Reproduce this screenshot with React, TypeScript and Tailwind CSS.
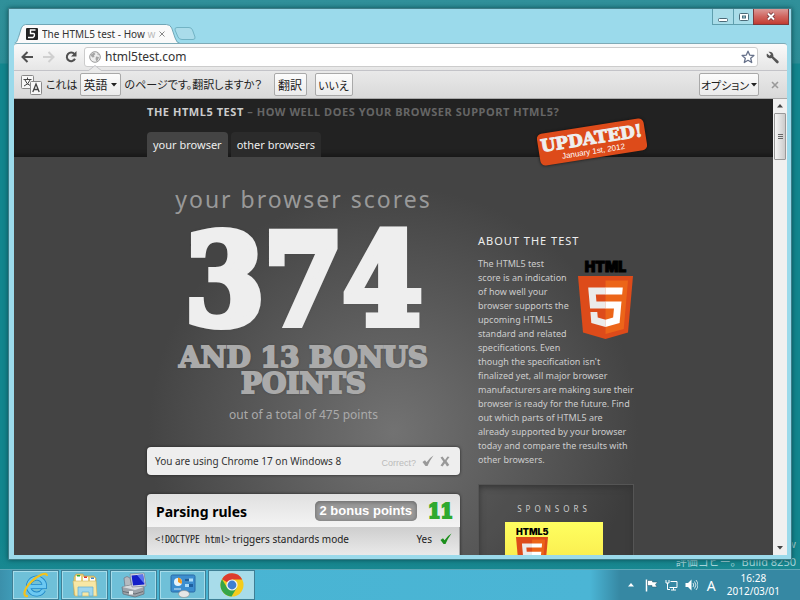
import React from "react";

const SANS = "font-['Noto_Sans','Noto_Sans_CJK_JP',sans-serif]";
const JP = "font-['Noto_Sans_CJK_JP',sans-serif] [font-feature-settings:'palt']";
const SLAB = "font-['DejaVu_Serif_Condensed','DejaVu_Serif',serif] font-bold";
const SLAB_WIDE = "font-['DejaVu_Serif',serif] font-bold";

function Html5Shield({ className }: { className: string }) {
  return (
    <svg viewBox="30 0 451 512" preserveAspectRatio="none" className={className} aria-hidden="true">
      <path fill="#dd4b1a" d="M71 460 30 0h451l-41 460-185 52z" />
      <path fill="#ec6519" d="m256 472 149-41 35-394H256z" />
      <path fill="#ebebeb" d="M256 208h-75l-5-58h80V94H114l1 15 14 156h127zM256 355l-64-17-4-45h-56l7 89 117 32z" />
      <path fill="#fff" d="M255 208v57h70l-7 73-63 17v59l116-32 1-10 13-149 2-15zM255 94v56h137l1-12 3-29 1-15z" />
    </svg>
  );
}

function WindowControls() {
  const base = "flex h-4 items-center justify-center border border-t-0 border-[#5f9fae]";
  return (
    <div className="-mr-0.5 flex self-start">
      <button aria-label="最小化" className={`${base} w-[22px] bg-[#a9dde9]`}>
        <svg width="10" height="12" viewBox="0 0 10 12">
          <rect x=".5" y="7.5" width="9" height="3" rx="1" fill="#fff" stroke="#4b6a78" />
        </svg>
      </button>
      <button aria-label="最大化" className={`${base} -ml-px w-[21px] bg-[#a9dde9]`}>
        <svg width="10" height="8" viewBox="0 0 10 8">
          <rect x=".5" y=".5" width="9" height="7" rx="1" fill="#fff" stroke="#4b6a78" />
          <rect x="3.5" y="3" width="3" height="2" fill="#a9dde9" stroke="#4b6a78" />
        </svg>
      </button>
      <button
        aria-label="閉じる"
        className="-ml-px flex h-4 w-9 items-center justify-center border border-t-0 border-[#7c3a3c] bg-gradient-to-b from-[#d99a98] via-[#d0655f] to-[#c23a30]"
      >
        <svg width="10" height="9" viewBox="0 0 10 9">
          <path d="M2 1.5 8 7.5M8 1.5 2 7.5" stroke="#6d3337" strokeWidth="3.6" />
          <path d="M2 1.5 8 7.5M8 1.5 2 7.5" stroke="#fff" strokeWidth="2" />
        </svg>
      </button>
    </div>
  );
}

function TitleBar() {
  return (
    <div className="flex h-[34px] shrink-0 items-end justify-between">
      <div className="flex items-end">
        <div className="relative flex h-[19px] w-[166px] items-center pl-3">
          <svg viewBox="0 0 170 19" className="absolute inset-0 h-full w-full" preserveAspectRatio="none" aria-hidden="true">
            <path
              d="M0 19.500C3 19 3.500 16 5 12L7.500 4Q9 .5 12 .5H156Q160 .5 161.500 4L165 14Q166.500 19 170 19.500Z"
              fill="#fafafa"
              stroke="#6fa5b5"
            />
          </svg>
          <svg width="12" height="12" viewBox="0 0 12 12" className="relative shrink-0" aria-hidden="true">
            <rect width="12" height="12" rx="1" fill="#222" />
            <path d="M9.500 2H4.500V5.500H7.500Q8.500 5.500 8.500 7T7 9.500H2" fill="none" stroke="#fff" strokeWidth="1.400" />
          </svg>
          <span className={`relative ml-1 w-[115px] shrink-0 overflow-hidden whitespace-nowrap text-[10px] leading-4 text-[#333] ${SANS}`}>
            The HTML5 test - How <span className="text-[#bbb]">w</span>
          </span>
          <button aria-label="タブを閉じる" className="relative ml-0.5">
            <svg width="6" height="6" viewBox="0 0 6 6">
              <path d="m.5.5 5 5m0-5-5 5" stroke="#888" />
            </svg>
          </button>
        </div>
        <button aria-label="新しいタブ" className="mb-[3px] -ml-1.5">
          <svg width="22" height="13" viewBox="0 0 22 13">
            <path d="M3 .5H15Q17.500.5 18.500 3L21 10Q21.500 12.500 19 12.500H8Q5 12.500 4 10L1 3Q.5.5 3 .5Z" fill="#aadcea" stroke="#72b3c4" />
          </svg>
        </button>
      </div>
      <WindowControls />
    </div>
  );
}

function Toolbar() {
  return (
    <div className="flex h-[27px] shrink-0 items-center rounded-t-[3px] border-t border-[#7faab6] bg-gradient-to-b from-[#fafafa] to-[#e6e6e6] pr-2 pl-[7px]">
      <button aria-label="戻る">
        <svg width="12" height="12" viewBox="0 0 12 12" fill="none" stroke="#505050" strokeWidth="2">
          <path d="M12 6H2M6.500 1 1.500 6l5 5" />
        </svg>
      </button>
      <button aria-label="進む" className="ml-2.5">
        <svg width="12" height="12" viewBox="0 0 12 12" fill="none" stroke="#d0d0d0" strokeWidth="2">
          <path d="M0 6h10M5.500 1l5 5-5 5" />
        </svg>
      </button>
      <button aria-label="再読み込み" className="ml-2.5">
        <svg width="12" height="12" viewBox="0 0 12 12">
          <path d="M9.500 3.200A4.300 4.300 0 1 0 10 7.800" fill="none" stroke="#505050" strokeWidth="2" />
          <path d="M11.500 0v5.500H6z" fill="#505050" />
        </svg>
      </button>
      <div className="ml-[7px] flex h-5 grow items-center rounded-[3px] border border-[#ccc] bg-white pr-0.5 pl-1">
        <svg width="12" height="12" viewBox="0 0 12 12" aria-hidden="true">
          <circle cx="6" cy="6" r="5.300" fill="#eee" stroke="#999" />
          <path d="M2 3.500 5 1.500 6.500 3 5 4.500 5.500 6 3.500 6.500 2 5zM7 5.500l3 .5-1 3-1.500 1.500L6.500 8zM8 2l2 1.500-1 1z" fill="#a5a5a5" />
        </svg>
        <input
          aria-label="アドレス"
          defaultValue="html5test.com"
          className={`ml-1 min-w-0 grow bg-transparent text-[12px] leading-4 text-[#333] outline-none ${SANS}`}
        />
        <button aria-label="ブックマーク">
          <svg width="14" height="14" viewBox="0 0 14 14">
            <path d="m7 1.200 1.700 3.900 4.200.4-3.200 2.800 1 4.200L7 10.300l-3.700 2.200 1-4.200L1.100 5.500l4.200-.4z" fill="#fff" stroke="#66718a" strokeWidth="1.300" strokeLinejoin="round" />
          </svg>
        </button>
      </div>
      <button aria-label="設定" className="ml-2">
        <svg width="13" height="13" viewBox="0 0 13 13">
          <path d="M2.500.8 5 3.200 3.600 4.800 1 2.400C0 4.500 1 7 3.500 7.300c.8.1 1.500 0 2.100-.2l4.800 5c1.400 1 2.900-.6 2-2L7.300 5.500C7.900 2.500 5.500.1 2.500.8Z" fill="#555" />
        </svg>
      </button>
    </div>
  );
}

function TranslateBar() {
  const box =
    "h-[23px] shrink-0 whitespace-nowrap rounded-[2px] border border-[#a9a9a9] bg-gradient-to-b from-[#fcfcfc] to-[#ebebeb] leading-5 text-[#222]";
  return (
    <div className={`relative flex h-[29px] shrink-0 items-center border-t border-b border-t-[#c3c3c8] border-b-[#aaa] bg-gradient-to-b from-[#e9e9e9] to-[#d9d9d9] pr-2 pl-[7px] text-[11px] text-[#222] ${JP}`}>
      <svg width="14" height="6" viewBox="0 0 14 6" className="absolute -top-[6px] left-[74px]" aria-hidden="true">
        <path d="M0 6 7 .5 14 6" fill="#e9e9e9" stroke="#c3c3c8" />
      </svg>
      <svg width="21" height="20" viewBox="0 0 21 20" aria-hidden="true">
        <rect x=".5" y=".5" width="12" height="13" rx="1" fill="#f8f8f8" stroke="#888" />
        <path d="M2.500 4.500h8M6.500 2.500v2M4 5q1.500 4.500 6 6M9 5Q7.500 9.500 3 11" fill="none" stroke="#444" />
        <rect x="9.500" y="6.500" width="11" height="13" rx="1" fill="#f8f8f8" stroke="#888" />
        <path d="m11.800 17 3.200-8 3.200 8M13 14.500h4" fill="none" stroke="#444" strokeWidth="1.300" />
      </svg>
      <span className="ml-1 whitespace-nowrap">これは</span>
      <div className="relative ml-0.5">
        <select aria-label="言語" className={`w-[41px] appearance-none pl-[3px] text-[12px] ${box}`}>
          <option>英語</option>
        </select>
        <svg width="6" height="4" viewBox="0 0 6 4" className="pointer-events-none absolute top-2.5 right-1">
          <path d="M0 0h6L3 3.500z" fill="#222" />
        </svg>
      </div>
      <span className="ml-1 w-[149px] shrink-0 whitespace-nowrap">のページです。翻訳しますか？</span>
      <button className={`w-[33px] text-[12px] ${box}`}>翻訳</button>
      <button className={`ml-2 w-[38px] text-[11px] ${box}`}>いいえ</button>
      <div className="grow" />
      <button className={`flex w-[60px] items-center justify-center gap-0.5 text-[11px] ${box}`}>
        オプション
        <svg width="6" height="4" viewBox="0 0 6 4" className="shrink-0">
          <path d="M0 0h6L3 3.500z" fill="#222" />
        </svg>
      </button>
      <button aria-label="閉じる" className="ml-3">
        <svg width="8" height="8" viewBox="0 0 8 8">
          <path d="m1 1 6 6m0-6L1 7" stroke="#999" strokeWidth="1.600" />
        </svg>
      </button>
    </div>
  );
}

function SiteHeader() {
  return (
    <header className="bg-[#222] shadow-[inset_0_-5px_5px_-3px_#151515]">
      <div className="relative mx-auto flex h-[58px] w-[493px] flex-col justify-between">
        <h1 className="pt-[5px] text-[11px] leading-4 font-bold tracking-wider whitespace-nowrap text-[#666]">
          <span className="text-[#ccc]">THE HTML5 TEST</span> – HOW WELL DOES YOUR BROWSER SUPPORT HTML5?
        </h1>
        <nav className="flex gap-[3px] text-[11px] leading-[25px] text-[#eee]">
          <a href="#your" className="rounded-t-[4px] bg-[#444] px-1.5">your browser</a>
          <a href="#other" className="rounded-t-[4px] bg-[#2b2b2b] px-1.5">other browsers</a>
        </nav>
        <div className="absolute top-[27px] -right-[6px] z-10 flex h-[32px] w-[108px] -rotate-[9deg] flex-col items-center justify-center rounded-[5px] bg-[#dd4b1a] text-white shadow-[0_0_3px_#111]">
          <span className={`text-[17px] leading-[19px] text-[#eee] [-webkit-text-stroke:1px_#eee] ${SLAB_WIDE}`}>UPDATED!</span>
          <span className="font-['Liberation_Sans',Arial,sans-serif] text-[8px] leading-[8px]">January 1st, 2012</span>
        </div>
      </div>
    </header>
  );
}

function Score() {
  return (
    <section className="flex flex-col items-center text-center">
      <h2 className="text-[23px] leading-8 tracking-[2px] whitespace-nowrap text-[#999]">your browser scores</h2>
      <strong className={`mt-3 text-[126px] leading-[106px] text-[#eee] [-webkit-text-stroke:8px_#eee] [text-shadow:0_0_5px_#333] ${SLAB}`}>374</strong>
      <p className={`mt-3 w-[270px] text-[28px] leading-[26px] text-[#aaa] [-webkit-text-stroke:2px_#aaa] [text-shadow:0_0_3px_#333] ${SLAB_WIDE}`}>
        AND 13 BONUS POINTS
      </p>
      <p className="mt-1.5 text-[12px] leading-6 text-[#aaa]">out of a total of 475 points</p>
    </section>
  );
}

function Check({ color }: { color: string }) {
  return (
    <svg width="12" height="12" viewBox="0 0 12 12" aria-hidden="true">
      <path d="M.5 7 3 5.200 4.600 7.200Q7 3 11.500.5 7.800 5.500 5.500 11H3.500Z" fill={color} />
    </svg>
  );
}

function Results() {
  return (
    <>
      <div className="mt-5 flex h-7 items-center rounded-[4px] bg-[#eee] px-2 text-[10px] text-[#333] shadow-[0_0_3px_#222]">
        <span className="grow whitespace-nowrap">You are using Chrome 17 on Windows 8</span>
        <span className="pt-1 font-['Liberation_Sans',Arial,sans-serif] text-[9px] leading-3 text-[#bbb]">Correct?</span>
        <button aria-label="正しい" className="ml-1.5"><Check color="#999" /></button>
        <button aria-label="間違い" className="mr-0.5 ml-1.5">
          <svg width="10" height="11" viewBox="0 0 10 11">
            <path d="m.5 1.500 2-1L5 4 7.500.5l2 .5L6.500 5l2.800 4-2.300 1.500L5 7.300l-2.500 3.200-2-1L3.300 5.500z" fill="#999" />
          </svg>
        </button>
      </div>
      <table className="mt-[19px] w-full border-separate border-spacing-0 overflow-hidden rounded-t-[4px] shadow-[0_0_3px_#222]">
        <thead>
          <tr className="h-[33px] bg-gradient-to-b from-[#e0e0e0] to-[#f4f4f4]">
            <th colSpan={2} className="pr-[7px] pl-[9px]">
              <div className="flex items-center gap-[11px]">
                <span className="grow pt-0.5 text-left text-[14px] leading-5 font-bold text-black">Parsing rules</span>
                <span className="rounded-[5px] bg-[#999] px-[5px] font-['Liberation_Sans',Arial,sans-serif] text-[13px] leading-5 whitespace-nowrap text-white shadow-[inset_0_1px_4px_#666]">
                  2 bonus points
                </span>
                <span className={`text-[20px] leading-5 text-[#2fa92f] [-webkit-text-stroke:2px_#2fa92f] ${SLAB}`}>11</span>
              </div>
            </th>
          </tr>
        </thead>
        <tbody>
          <tr className="h-[34px] bg-gradient-to-b from-[#cecece] to-[#f0f0f0] align-top text-[10px] leading-6 text-[#222]">
            <td className="pl-2 whitespace-nowrap">
              <code className="font-['Noto_Sans_Mono_CJK_JP','Noto_Sans_CJK_JP',monospace] text-[10px]">&lt;!DOCTYPE html&gt;</code> triggers standards mode
            </td>
            <td className="pr-2">
              <div className="flex items-center justify-end gap-2">Yes <Check color="#1c8f1c" /></div>
            </td>
          </tr>
        </tbody>
      </table>
    </>
  );
}

function About() {
  return (
    <aside className="w-[156px] pt-[50px] text-[#ccc]">
      <h3 className="text-[11px] leading-4 tracking-[1px] whitespace-nowrap text-[#eee]">ABOUT THE TEST</h3>
      <div className="mt-2 text-[9px] leading-[14px]">
        <div className="float-right ml-1.5 flex h-[88px] w-[57px] flex-col items-center pt-px">
          <span className="font-['Inter',sans-serif] text-[14px] leading-[18px] font-black text-black [-webkit-text-stroke:1px_#000]">HTML</span>
          <Html5Shield className="h-[63px] w-[55px]" />
        </div>
        The HTML5 test
        <br />
        score is an indication
        <br />
        of how well your browser supports the upcoming HTML5 standard and related
        specifications. Even though the specification isn't finalized yet, all major browser manufacturers are making
        sure their browser is ready for the future. Find out which parts of HTML5 are already supported by your browser
        today and compare the results with other browsers.
      </div>
      <div className="mt-[17px] flex h-40 flex-col items-center border border-[#555] bg-black/10 pt-4 pr-1 shadow-[inset_0_2px_6px_#333]">
        <h4 className="text-[8px] leading-4 tracking-[4px] text-[#ccc]">SPONSORS</h4>
        <a href="#sponsor" className="mt-[5px] flex h-[100px] w-[98px] flex-col items-start bg-gradient-to-b from-[#ffff60] to-[#f0d030] px-[11px] pt-1">
          <span className="font-['Inter',sans-serif] text-[9px] leading-[11px] font-black text-black">HTML5</span>
          <Html5Shield className="h-9 w-8" />
        </a>
      </div>
    </aside>
  );
}

function Scrollbar() {
  return (
    <div className="flex w-3.5 shrink-0 flex-col items-center bg-[#f0f0f0]">
      <button aria-label="上へ" className="flex h-3.5 w-full items-center justify-center">
        <svg width="6" height="4" viewBox="0 0 6 4"><path d="M0 3.500h6L3 0z" fill="#444" /></svg>
      </button>
      <div className="flex h-[47px] w-3 flex-col items-center justify-center gap-px rounded-[1px] border border-[#999] bg-gradient-to-r from-[#f5f5f5] to-[#ccc]">
        <i className="h-px w-[5px] bg-[#666]" />
        <i className="h-px w-[5px] bg-[#666]" />
        <i className="h-px w-[5px] bg-[#666]" />
      </div>
      <div className="grow" />
      <button aria-label="下へ" className="flex h-3.5 w-full items-center justify-center">
        <svg width="6" height="4" viewBox="0 0 6 4"><path d="M0 0h6L3 3.500z" fill="#444" /></svg>
      </button>
    </div>
  );
}

function ExplorerIcon() {
  return (
    <svg width="28" height="26" viewBox="0 0 28 26">
      <path d="M3 5 5 2h7l1 2h10l2 2v17H3z" fill="#e9cf7c" stroke="#b99a4a" strokeWidth=".6" />
      <path d="M5 4h5v5H5z" fill="#fff" /><path d="M6 3h3v1.500H6z" fill="#3a3" />
      <path d="M12 5h5v4h-5z" fill="#fff" /><path d="M13 4.500h3V6h-3z" fill="#d33" />
      <path d="M19 6h5v4h-5z" fill="#fff" /><path d="M20 5.500h3V7h-3z" fill="#48c" />
      <path d="M2 9h23l1 15H4z" fill="#f7e7a5" stroke="#cdb262" strokeWidth=".6" />
      <path d="M7 15h15v9h-4v-4h-7v4H7z" fill="#9fd6ef" stroke="#5faed0" strokeWidth=".7" />
    </svg>
  );
}

function IeIcon() {
  return (
    <svg width="26" height="26" viewBox="0 0 26 26">
      <path d="M20.500 18A8 8 0 1 1 21.500 14.500H7" fill="none" stroke="#1f86c6" strokeWidth="5" />
      <path d="M20.500 18A8 8 0 1 1 21.500 14.500H7" fill="none" stroke="#6cc9f2" strokeWidth="3.400" />
      <path d="M5 24C-1 25 1 17 8 10S24-1 24 4" fill="none" stroke="#f3c21c" strokeWidth="2.200" />
    </svg>
  );
}

function SystemIcon() {
  return (
    <svg width="26" height="26" viewBox="0 0 26 26">
      <path d="M3 6q3-3 6 0l2 9H4z" fill="#b5bac0" stroke="#667" strokeWidth=".6" />
      <path d="m1 15 9-2 13 2v7l-9 3-12-3z" fill="#9da3aa" stroke="#5c636b" strokeWidth=".6" />
      <path d="m1 15 13 3 9-3-12-2z" fill="#d6dade" />
      <path d="M2 19.500l12 2.500 8-2.500" fill="none" stroke="#666c73" />
      <path d="M8 19h4v3.500H8z" fill="#eceef0" />
      <path d="m9 2 14-1 2 13-14 1z" fill="#d5dbe2" stroke="#778" strokeWidth=".6" />
      <path d="m10.500 3.500 11.500-1 1.500 10-11.500 1z" fill="#1420c8" />
      <path d="m16 3 6-.5L23.500 12z" fill="#5a74ef" />
    </svg>
  );
}

function ControlPanelIcon() {
  return (
    <svg width="28" height="26" viewBox="0 0 28 26">
      <rect x="2" y="3" width="24" height="17" rx="1.500" fill="#3c8ed0" stroke="#2a6ba6" />
      <circle cx="9" cy="10" r="4" fill="#e6f3fb" /><path d="M9 10V5.500a4.500 4.500 0 0 1 3.500 6.500z" fill="#f39a21" />
      <path d="M16 6.500h8v3h-8zM16 12h8v3h-8z" fill="#a9dbf8" /><path d="M16 6.500h4v3h-4zM20 12h4v3h-4z" fill="#1d5f9e" />
      <path d="M5 17h7" stroke="#d9ecf9" />
      <ellipse cx="15" cy="22" rx="5.500" ry="3.500" fill="#e6e6e6" stroke="#8b8b8b" strokeWidth=".6" />
    </svg>
  );
}

function ChromeIcon() {
  return (
    <svg width="24" height="24" viewBox="0 0 24 24">
      <circle cx="12" cy="12" r="11.500" fill="#f5cc1d" />
      <path d="M12 12 2 6.200A11.500 11.500 0 0 1 22.200 6.500H12z" fill="#dc3b2e" />
      <path d="M2 6.200A11.500 11.500 0 0 0 11.500 23.500L16.800 14.700 12 12 7.200 14.700z" fill="#35a548" />
      <circle cx="12" cy="12" r="5.600" fill="#f4f4f4" /><circle cx="12" cy="12" r="4.400" fill="#3f7fd0" />
    </svg>
  );
}

function Taskbar() {
  const apps: [string, React.ReactNode][] = [
    ["Internet Explorer", <IeIcon />],
    ["エクスプローラー", <ExplorerIcon />],
    ["デバイス", <SystemIcon />],
    ["コントロール パネル", <ControlPanelIcon />],
  ];
  const app = "flex w-[47px] items-center justify-center border border-[#3f7f95] shadow-[inset_0_0_0_1px_#a5dcea]";
  return (
    <footer className="relative flex h-[31px] shrink-0 items-stretch border-t border-[#5fa9b8] bg-[linear-gradient(to_right,#3b90ab_0,#48b4d2_40px,#4bb5d5_calc(100%-210px),#3688a3_calc(100%-180px),#3688a3_100%)] pl-3">
      <div className="flex gap-0.5">
        {apps.map(([name, icon]) => (
          <button key={name} aria-label={name} className={`${app} bg-[#6fc0d8]`}>{icon}</button>
        ))}
        <button aria-label="Google Chrome" className={`${app} bg-[#a8dcea]`}><ChromeIcon /></button>
      </div>
      <div className="grow" />
      <div className="flex items-center gap-[7px] pr-5 text-white">
        <svg width="6" height="4" viewBox="0 0 6 4"><path d="M0 3.500h6L3 0z" fill="#fff" /></svg>
        <svg width="13" height="13" viewBox="0 0 13 13" className="ml-1">
          <path d="M1.500.5v12" stroke="#fff" strokeWidth="1.500" /><path d="M2.500 1.500h5v1.500h5L10.500 5.500 12 8H7V6.500H2.500z" fill="#fff" stroke="#2a5566" strokeWidth=".5" />
        </svg>
        <svg width="13" height="12" viewBox="0 0 13 12" fill="none" stroke="#fff">
          <path d="M5.500 2.500h6.500v6H4.500M6 11h5M8.500 8.500V11M1 1v3h3V1M2.500 4v6.500H5" />
        </svg>
        <svg width="13" height="12" viewBox="0 0 13 12">
          <path d="M.5 4H3l3.500-3.500v11L3 8H.5z" fill="#fff" />
          <path d="M8 4q1.500 2 0 4M9.500 2.500q3 3.500 0 7M11 1q4 5 0 10" fill="none" stroke="#fff" strokeWidth=".8" />
        </svg>
        <span className={`ml-0.5 text-[14px] ${SANS}`}>A</span>
        <time className={`ml-1 text-center text-[10px] leading-[13px] ${SANS}`}>
          16:28
          <br />
          2012/03/01
        </time>
      </div>
    </footer>
  );
}

export default function App() {
  return (
    <div className="relative flex h-screen flex-col overflow-hidden bg-[linear-gradient(to_bottom,#30909a_0,#2c8d96_63px,#12868e_64px,#12868e_90%,#1f8a94_100%)]">
      <div className={`absolute right-1 bottom-[29px] text-right text-[11px] leading-[18px] text-[#a9d5da] ${SANS}`}>
        w
        <br />
        評価コピー。Build 8250
      </div>
      <div className="relative mx-2 mt-2 mb-[9px] flex min-h-0 grow flex-col rounded-[1px] border border-[#3f7c86] bg-[#9bdaeb] pr-1 pb-1 pl-[5px] shadow-[0_0_5px_#0b4c54]">
        <TitleBar />
        <Toolbar />
        <TranslateBar />
        <main className="flex min-h-0 grow overflow-hidden">
          <div className={`min-w-0 grow overflow-hidden bg-[#444] ${SANS}`}>
            <SiteHeader />
            <div className="min-h-full bg-[radial-gradient(circle_at_50%_275px,#727272_0,#444_245px)]">
              <div className="mx-auto flex w-[493px] gap-[18px] pt-[26px]">
                <div className="w-[313px] shrink-0">
                  <Score />
                  <Results />
                </div>
                <About />
              </div>
            </div>
          </div>
          <Scrollbar />
        </main>
      </div>
      <Taskbar />
    </div>
  );
}
